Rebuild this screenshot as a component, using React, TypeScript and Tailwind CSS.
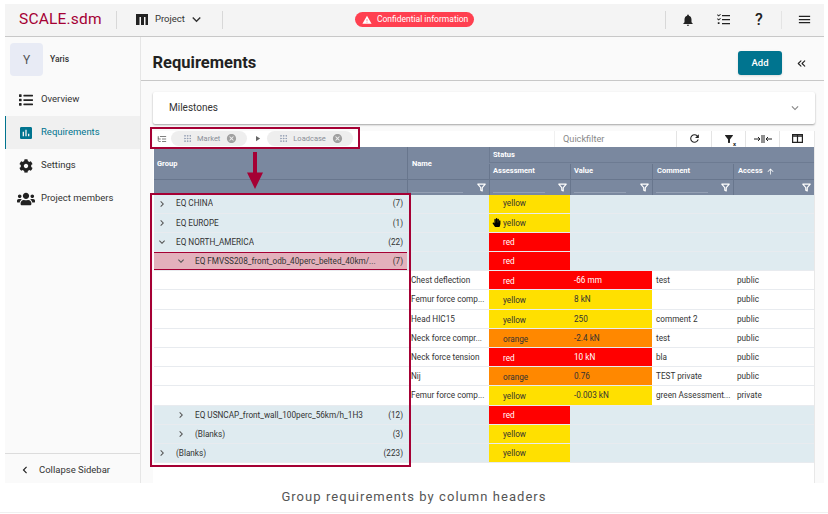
import {
  MdNotifications,
  MdMenu,
  MdKeyboardArrowDown,
  MdKeyboardArrowRight,
  MdKeyboardArrowLeft,
  MdInsertChart,
  MdRefresh,
  MdFilterAlt,
  MdWarning,
  MdCancel,
  MdArrowUpward,
  MdPlayArrow,
} from 'react-icons/md';
import { FaList, FaCog, FaUsers, FaHandPaper } from 'react-icons/fa';
import { LuChevronsLeft, LuFilter, LuGrip, LuListTree } from 'react-icons/lu';

const cols = 'grid grid-cols-[253px_82px_81px_82px_81px_81px]';

type Row = {
  group?: string;
  count?: string;
  level?: number;
  open?: boolean;
  selected?: boolean;
  name?: string;
  status: 'yellow' | 'red' | 'orange';
  value?: string;
  comment?: string;
  access?: string;
  grab?: boolean;
};

const rows: Row[] = [
  { group: 'EQ CHINA', count: '(7)', level: 0, status: 'yellow' },
  { group: 'EQ EUROPE', count: '(1)', level: 0, status: 'yellow', grab: true },
  { group: 'EQ NORTH_AMERICA', count: '(22)', level: 0, open: true, status: 'red' },
  { group: 'EQ FMVSS208_front_odb_40perc_belted_40km/...', count: '(7)', level: 1, open: true, selected: true, status: 'red' },
  { name: 'Chest deflection', status: 'red', value: '-66 mm', comment: 'test', access: 'public' },
  { name: 'Femur force comp...', status: 'yellow', value: '8 kN', comment: '', access: 'public' },
  { name: 'Head HIC15', status: 'yellow', value: '250', comment: 'comment 2', access: 'public' },
  { name: 'Neck force compr...', status: 'orange', value: '-2.4 kN', comment: 'test', access: 'public' },
  { name: 'Neck force tension', status: 'red', value: '10 kN', comment: 'bla', access: 'public' },
  { name: 'Nij', status: 'orange', value: '0.76', comment: 'TEST private', access: 'public' },
  { name: 'Femur force comp...', status: 'yellow', value: '-0.003 kN', comment: 'green Assessment...', access: 'private' },
  { group: 'EQ USNCAP_front_wall_100perc_56km/h_1H3', count: '(12)', level: 1, status: 'red' },
  { group: '(Blanks)', count: '(3)', level: 1, status: 'yellow' },
  { group: '(Blanks)', count: '(223)', level: 0, status: 'yellow' },
];

const statusBg = {
  yellow: 'bg-[#ffe000] text-[#333]',
  red: 'bg-[#ff0000] text-white',
  orange: 'bg-[#ff8800] text-[#333]',
};

function NavItem({ icon, label, active }: { icon: React.ReactNode; label: string; active?: boolean }) {
  return (
    <div
      className={
        'flex h-[33px] items-center border-l-[1px] pl-[13px] text-[9.5px] ' +
        (active ? 'border-[#00748f] bg-[#f0f0f0] text-[#00748f]' : 'border-transparent text-[#333]')
      }
    >
      <span className="flex w-[22px] shrink-0 items-center text-[#222]">{icon}</span>
      {label}
    </div>
  );
}

function Chip({ label }: { label: string }) {
  return (
    <div className="flex h-[15px] items-center rounded-full bg-[#eeeeee] pl-[12px] pr-[10px] text-[7.5px] text-[#8a8f98]">
      <LuGrip className="mr-[5px] text-[9px] text-[#8a97ad]" />
      <span>{label}</span>
      <MdCancel className="ml-[6px] text-[11px] text-[#a0a0a0]" />
    </div>
  );
}

function HeaderFilter({ input = true }: { input?: boolean }) {
  return (
    <div className="flex h-full items-center border-l border-[#68768d] pl-[3px] pr-[3px]">
      <div className={'mt-[10px] mr-auto h-[1px] w-[52px] ' + (input ? 'bg-[#94a0b4]' : '')} />
      <LuFilter className="text-[9px] text-white" strokeWidth={3} />
    </div>
  );
}

function GridRow({ row }: { row: Row }) {
  const isGroup = !!row.group;
  const bg = isGroup ? 'bg-[#dfebf0]' : 'bg-white';
  return (
    <div className={cols + ' h-[19.2px] border-b border-[#e8ebef] text-[8.2px] text-[#333] ' + bg}>
      <div
        className={
          'flex items-center pr-[4px] ' +
          (row.selected ? 'border-y border-[#a50034] bg-[#e3b1bc]' : '')
        }
        style={{ paddingLeft: 2 + (row.level ?? 0) * 19 }}
      >
        {isGroup && (
          <>
            {row.open ? (
              <MdKeyboardArrowDown className="mr-[8px] w-[12px] shrink-0 text-[12px] text-[#555]" />
            ) : (
              <MdKeyboardArrowRight className="mr-[8px] w-[12px] shrink-0 text-[12px] text-[#555]" />
            )}
            <span className="truncate">{row.group}</span>
            <span className="ml-auto pl-1 text-[#333]">{row.count}</span>
          </>
        )}
      </div>
      <div className="flex items-center truncate pl-[4px]">{row.name}</div>
      <div className={'relative flex items-center pl-[14px] ' + statusBg[row.status] + (isGroup ? '' : ' pt-[2px]')}>
        {row.grab && <FaHandPaper className="absolute left-[3px] text-[9px] text-black" />}
        {row.status}
      </div>
      <div className={'flex items-center pl-[4px] ' + (!isGroup ? statusBg[row.status] : '')}>{row.value}</div>
      <div className="flex items-center truncate pl-[4px]">{row.comment}</div>
      <div className="flex items-center pl-[4px]">{row.access}</div>
    </div>
  );
}

export default function App() {
  return (
    <div className="relative flex h-[514px] w-[828px] flex-col overflow-hidden bg-white font-['Roboto',sans-serif]">
      <div className="mx-[5px] mt-[4px] flex h-[479px] w-[819px] flex-col bg-[#fafafa]">
        {/* top bar */}
        <header className="flex h-[33px] shrink-0 items-center border-b-[1.5px] border-[#c8c8c8] bg-[#f4f4f4] pb-[1px]">
          <div className="ml-[14px] w-[97px] text-[15.5px] leading-none tracking-[0.2px] text-[#a50034]">SCALE.sdm</div>
          <div className="h-[18px] w-px bg-[#d8d8d8]" />
          <svg className="ml-[19px]" width="12" height="11" viewBox="0 0 12 11" fill="#222">
            <path d="M0 0h12v11h-2.5V3H8v8H5V3H3.5v8H0z" />
          </svg>
          <span className="ml-[7px] text-[9.5px] text-[#333]">Project</span>
          <MdKeyboardArrowDown className="ml-[3px] text-[17px] text-[#333]" />
          <div className="ml-[17px] h-[18px] w-px bg-[#d8d8d8]" />
          <div className="ml-[132px] flex h-[15px] w-[119px] items-center rounded-full bg-[#ff4050] pl-[7px] text-[8.5px] text-white">
            <MdWarning className="mr-[5px] text-[10px]" />
            Confidential information
          </div>
          <div className="ml-[191px] h-[18px] w-px bg-[#d8d8d8]" />
          <MdNotifications className="ml-[15px] text-[14px] text-[#222]" />
          <svg className="ml-[22px]" width="13" height="11" viewBox="0 0 13 11" fill="#222">
            <path d="M5 1h8v1.2H5zM5 5h8v1.2H5zM5 9h8v1.2H5zM0 1l.7-.7 1 1L3.300 0l.6.6L1.700 2.600zM0 5l.7-.7 1 1L3.300 4l.6.6L1.700 6.600zM.8 8.300h1.700V10H.8z" />
          </svg>
          <span className="ml-[24px] w-[10px] text-center text-[16px] font-medium leading-none text-[#222]">?</span>
          <div className="ml-[17px] h-[18px] w-px bg-[#e4e4e4]" />
          <MdMenu className="ml-[15px] text-[15px] text-[#222]" />
        </header>

        <div className="flex min-h-0 flex-1">
          {/* sidebar */}
          <aside className="flex w-[136px] shrink-0 flex-col border-r border-[#e6e6e6] bg-[#fafafa]">
            <div className="flex h-[45px] items-center pl-[5px]">
              <div className="flex h-[33px] w-[33px] items-center justify-center rounded-[4px] bg-[#e8ebf5] text-[12px] text-[#555]">Y</div>
              <span className="ml-[7px] mb-[1px] text-[8.5px] font-medium text-[#333]">Yaris</span>
            </div>
            <div className="mt-[1px]">
              <NavItem icon={<FaList className="text-[14px]" />} label="Overview" />
              <NavItem active icon={<MdInsertChart className="-ml-[1px] text-[16px] text-[#00748f]" />} label="Requirements" />
              <NavItem icon={<FaCog className="text-[14px]" />} label="Settings" />
              <NavItem icon={<FaUsers className="-ml-[2px] text-[18px]" />} label="Project members" />
            </div>
            <div className="mt-auto flex h-[30px] items-center border-t border-[#dcdcdc] pl-[13px] pt-[3px] text-[9.5px] text-[#333]">
              <MdKeyboardArrowLeft className="mr-[7px] text-[14px] text-[#222]" />
              Collapse Sidebar
            </div>
          </aside>

          {/* main */}
          <main className="flex min-w-0 flex-1 flex-col">
            <div className="flex h-[43.5px] shrink-0 items-center border-b border-[#c8c8c8] pl-[11.5px] pt-[10px]">
              <h1 className="text-[16.500px] font-bold text-[#222]">Requirements</h1>
              <button className="ml-auto flex h-[24px] w-[44px] items-center justify-center rounded-[3px] bg-[#00748f] text-[9.5px] font-medium text-white shadow-sm">
                Add
              </button>
              <LuChevronsLeft className="ml-[13px] mr-[16px] text-[13px] text-[#222]" />
            </div>

            <div className="flex min-h-0 flex-1 flex-col pl-[12px] pr-[9px] pt-[11px]">
              <div className="flex h-[32px] shrink-0 items-center rounded-[2px] bg-white pl-[16px] pr-[13px] text-[10px] text-[#333] shadow-[0_1px_2px_rgba(0,0,0,0.35)]">
                Milestones
                <MdKeyboardArrowDown className="ml-auto text-[14px] text-[#888]" />
              </div>

              <div className="mt-[7px] flex min-h-0 flex-1 flex-col border-r border-[#e8e8e8] bg-white pl-px">
                {/* toolbar */}
                <div className="flex h-[16px] shrink-0 items-center">
                  <LuListTree className="ml-[3px] text-[10px] text-[#666]" />
                  <div className="ml-[4px]">
                    <Chip label="Market" />
                  </div>
                  <MdPlayArrow className="mx-[5.500px] text-[9px] text-[#666]" />
                  <Chip label="Loadcase" />
                  <div className="ml-auto flex h-full items-center">
                    <div className="flex h-full w-[122px] items-center border-l border-[#f0f0f0] pl-[8px] text-[9.200px] text-[#888]">Quickfilter</div>
                    <div className="flex h-full w-[35px] items-center justify-center border-l border-[#e4e4e4] text-[13px] text-[#222]">
                      <MdRefresh />
                    </div>
                    <div className="relative flex h-full w-[34px] items-center justify-center border-l border-[#e4e4e4] text-[12px] text-[#222]">
                      <MdFilterAlt />
                      <span className="absolute bottom-[0px] right-[9px] text-[6px] font-bold leading-none">x</span>
                    </div>
                    <div className="flex h-full w-[34px] items-center justify-center border-l border-[#e4e4e4]">
                      <svg width="18" height="8" viewBox="0 0 18 8" fill="none" stroke="#222" strokeWidth="1">
                        <path d="M0 4h6M4 2l2 2-2 2M8 0v8M10 0v8M12 4h6M14 2l-2 2 2 2" />
                      </svg>
                    </div>
                    <div className="flex h-full w-[35px] items-center justify-center border-l border-[#e4e4e4]">
                      <svg width="11" height="9" viewBox="0 0 11 9" fill="none" stroke="#222" strokeWidth="1.200">
                        <path d="M.6.600h9.800v7.800H.6zM5.500.6v7.800M.6 2.200h9.800" />
                      </svg>
                    </div>
                  </div>
                </div>

                {/* column headers */}
                <div className={cols + ' h-[48px] shrink-0 bg-[#7a889f] text-[7.5px] font-bold text-white'}>
                  <div className="flex h-[32px] items-center pl-[3px] pt-[2px]">Group</div>
                  <div className="flex h-[32px] items-center border-l border-[#68768d] pl-[4px] pt-[2px]">Name</div>
                  <div className="col-span-4 flex h-[32px] flex-col">
                    <div className="flex h-[16px] items-center border-b border-l border-[#6d7b92] pl-[3px] pt-[1px]">Status</div>
                    <div className="grid h-[16px] grid-cols-[81px_82px_81px_81px] pt-[1px]">
                      <div className="flex items-center border-l border-[#68768d] pl-[3px]">Assessment</div>
                      <div className="flex items-center border-l border-[#68768d] pl-[3px]">Value</div>
                      <div className="flex items-center border-l border-[#68768d] pl-[4px]">Comment</div>
                      <div className="flex items-center border-l border-[#68768d] pl-[4px]">
                        Access
                        <MdArrowUpward className="ml-[3px] text-[9px]" />
                      </div>
                    </div>
                  </div>
                  <div className="h-[16px] border-t border-[#68768d]" />
                  <div className="h-[16px] border-t border-[#68768d]"><HeaderFilter /></div>
                  <div className="h-[16px] border-t border-[#68768d]"><HeaderFilter /></div>
                  <div className="h-[16px] border-t border-[#68768d]"><HeaderFilter /></div>
                  <div className="h-[16px] border-t border-[#68768d]"><HeaderFilter /></div>
                  <div className="h-[16px] border-t border-[#68768d]"><HeaderFilter input={false} /></div>
                </div>

                {rows.map((row, i) => (
                  <GridRow key={i} row={row} />
                ))}
              </div>
            </div>
          </main>
        </div>
      </div>

      <div className="flex h-[30px] items-center justify-center border-b border-[#f0f0f0] pb-[2px] text-[13px] tracking-[1.05px] text-[#555]">
        Group requirements by column headers
      </div>

      {/* annotation outlines drawn over the screenshot */}
      <div className="absolute left-[150px] top-[127px] h-[22px] w-[210px] border-[2.5px] border-[#a50034]" />
      <div className="absolute left-[150px] top-[193px] h-[274px] w-[261px] border-[2.5px] border-[#a50034]" />
      <svg className="absolute left-[247px] top-[152px]" width="16" height="37" viewBox="0 0 16 37" fill="#a50034">
        <path d="M6 0h4v20.500h6L8 37 0 20.500h6z" />
      </svg>
    </div>
  );
}
